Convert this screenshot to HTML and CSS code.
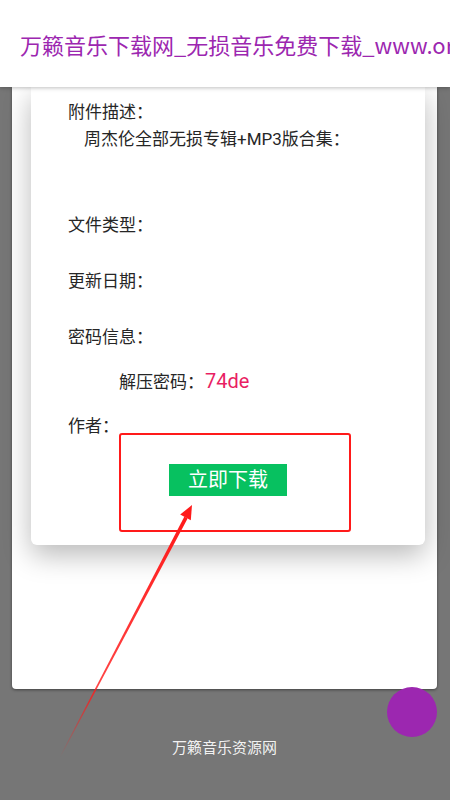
FILE: index.html
```html
<!DOCTYPE html>
<html lang="zh-CN">
<head>
<meta charset="utf-8">
<title>万籁音乐下载网</title>
<link rel="stylesheet" href="styles.css">
</head>
<body>
<div class="page">
  <header class="topbar">
    <h1 class="title">万籁音乐下载网_无损音乐免费下载_www.ornm.cn</h1>
  </header>
  <main class="main">
    <section class="outer-card">
      <article class="inner-card">
        <div class="row row-first">附件描述：</div>
        <div class="row row-desc">周杰伦全部无损专辑+MP3版合集：</div>
        <div class="row row-type">文件类型：</div>
        <div class="row row-gap">更新日期：</div>
        <div class="row row-gap">密码信息：</div>
        <div class="row row-pwd">解压密码：<span class="pwd">74de</span></div>
        <div class="row row-pwd-gap">作者：</div>
        <div class="btn-wrap"><span class="btn">立即下载</span></div>
      </article>
    </section>
    <footer class="footer">万籁音乐资源网</footer>
  </main>
  <div class="highlight"></div>
  <div class="fab"></div>
  <svg class="arrow" width="450" height="800" viewBox="0 0 450 800">
    <defs>
      <linearGradient id="fade" x1="60" y1="757" x2="186" y2="517" gradientUnits="userSpaceOnUse">
        <stop offset="0" stop-color="#ff1a1a" stop-opacity="0"/>
        <stop offset="0.25" stop-color="#ff1a1a" stop-opacity="0.8"/>
        <stop offset="1" stop-color="#ff1a1a" stop-opacity="1"/>
      </linearGradient>
    </defs>
    <polygon points="59.6,757 60.4,757.3 187.6,518.4 184.4,516.6" fill="url(#fade)"/>
    <polygon points="192,505 190.8,520.2 180.2,514.6" fill="#ff1a1a"/>
  </svg>
</div>
</body>
</html>
```
FILE: styles.css
```css
html, body {
  margin: 0;
  padding: 0;
}
body {
  width: 450px;
  height: 800px;
  overflow: hidden;
  background: #767676;
  font-family: "Roboto", "Noto Sans CJK SC", sans-serif;
  color: #262626;
}
.page {
  position: relative;
  width: 450px;
  height: 800px;
  overflow: hidden;
}
.topbar {
  position: relative;
  z-index: 2;
  height: 87px;
  background: #fff;
  box-shadow: 0 1px 4px rgba(0, 0, 0, 0.25);
  display: flex;
  align-items: center;
  padding-left: 20px;
  overflow: hidden;
}
.title {
  margin: 0;
  font-family: "Noto Sans CJK SC", sans-serif;
  font-weight: normal;
  font-size: 22px;
  line-height: 30px;
  color: #9c27b0;
  white-space: nowrap;
}
.main {
  padding: 0 13px 0 12px;
}
.outer-card {
  background: #fff;
  border-radius: 0 0 4px 4px;
  box-shadow: 0 1px 3px rgba(0, 0, 0, 0.45);
  padding: 0 12px 144px 19px;
}
.inner-card {
  background: #fff;
  border-radius: 0 0 6px 6px;
  box-shadow: 0 10px 28px rgba(0, 0, 0, 0.28);
  padding: 11.5px 0 49px 37px;
}
.row {
  font-size: 17px;
  line-height: 27px;
}
.row-desc {
  padding-left: 16px;
}
.row-type {
  margin-top: 59px;
}
.row-gap {
  margin-top: 29px;
}
.row-pwd {
  margin-top: 17px;
  padding-left: 51px;
}
.row-pwd-gap {
  margin-top: 17px;
}
.pwd {
  font-size: 20px;
  color: #e91e63;
  margin-left: 1px;
}
.btn-wrap {
  display: flex;
  justify-content: center;
  margin-top: 24.5px;
  margin-left: -37px;
}
.btn {
  display: block;
  width: 118px;
  height: 32px;
  line-height: 32px;
  text-align: center;
  background: #07c160;
  color: #fff;
  font-size: 20px;
}
.footer {
  margin-top: 49px;
  text-align: center;
  font-size: 15px;
  line-height: 20px;
  color: rgba(255, 255, 255, 0.92);
}
.highlight {
  position: absolute;
  left: 119px;
  top: 433px;
  width: 228px;
  height: 95px;
  border: 2px solid #ff1a1a;
  border-radius: 3px;
}
.fab {
  position: absolute;
  left: 387px;
  top: 687px;
  width: 50px;
  height: 50px;
  border-radius: 50%;
  background: #9c27b0;
}
.arrow {
  position: absolute;
  left: 0;
  top: 0;
  pointer-events: none;
}
```
